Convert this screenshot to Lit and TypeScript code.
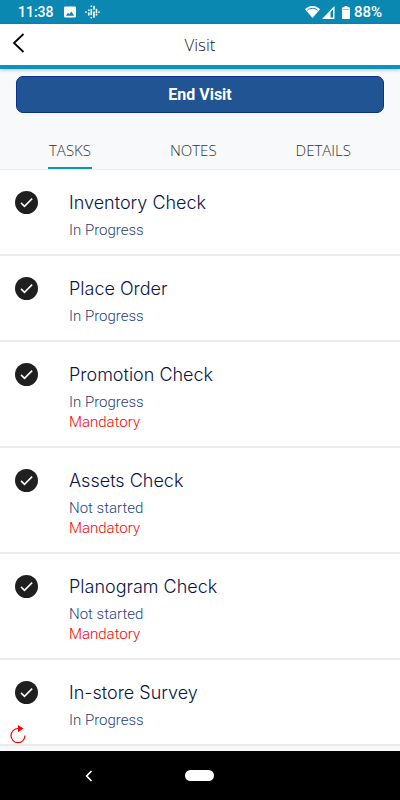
import { LitElement, html, css, nothing } from "lit";
import { customElement, property, state } from "lit/decorators.js";
import { classMap } from "lit/directives/class-map.js";

interface Task {
  title: string;
  status: string;
  mandatory: boolean;
}

const TASKS: Task[] = [
  { title: "Inventory Check", status: "In Progress", mandatory: false },
  { title: "Place Order", status: "In Progress", mandatory: false },
  { title: "Promotion Check", status: "In Progress", mandatory: true },
  { title: "Assets Check", status: "Not started", mandatory: true },
  { title: "Planogram Check", status: "Not started", mandatory: true },
  { title: "In-store Survey", status: "In Progress", mandatory: false },
];

@customElement("status-bar")
class StatusBar extends LitElement {
  static styles = css`
    :host {
      display: flex;
      align-items: center;
      justify-content: space-between;
      flex: none;
      height: 24px;
      padding: 0 18px;
      background: #0a88b2;
      color: #fff;
      font: 500 14px/24px Roboto, sans-serif;
    }
    .group {
      display: flex;
      align-items: center;
    }
    .clock {
      margin-right: 10px;
    }
    .picture {
      margin-right: 9px;
    }
    .signal {
      margin-left: 1px;
    }
    .battery {
      margin: 0 4px 0 7px;
    }
    .percent {
      font-size: 15px;
    }
    svg {
      display: block;
    }
  `;

  render() {
    return html`
      <div class="group">
        <span class="clock">11:38</span>
        <svg class="picture" width="12" height="12" viewBox="0 0 13 12">
          <path fill="#fff" fill-rule="evenodd" d="M1.5 0h10A1.5 1.5 0 0 1 13 1.500v9a1.500 1.500 0 0 1-1.500 1.500h-10A1.500 1.500 0 0 1 0 10.500v-9A1.500 1.500 0 0 1 1.500 0zM2 10h9L8 5.500 5.800 8.400 4.300 6.800z" />
        </svg>
        <svg width="15" height="14" viewBox="0 0 15 14" stroke="#fff" stroke-width="1.700" stroke-linecap="round">
          <path d="M1 7v.1M3.800 5.200v.1M3.800 8v1.800M6.300 1.200v.1M6.300 4.500v5M6.300 12.600v.1M9 1.500v2.500M9 7v5M11.500 4.500v3M11.500 9.600v.1M14 7v.1" />
        </svg>
      </div>
      <div class="group">
        <svg width="15" height="12" viewBox="0 0 15 12">
          <path fill="#fff" d="M7.500 12 0 3.200C4.200-1.100 10.800-1.100 15 3.200z" />
          <path fill="none" stroke="#0a88b2" d="M2.300 4.300c3-2.600 7.400-2.600 10.400 0" />
        </svg>
        <svg class="signal" width="14" height="13" viewBox="0 0 14 13">
          <path fill="#fff" fill-rule="evenodd" d="M13.500 0v13H1zM12 3.500 9.500 6v5.500H12z" />
        </svg>
        <svg class="battery" width="8" height="13" viewBox="0 0 8 13">
          <path fill="#fff" d="M2.500 0h3v1.200H7a1 1 0 0 1 1 1V12a1 1 0 0 1-1 1H1a1 1 0 0 1-1-1V2.200a1 1 0 0 1 1-1h1.500z" />
          <path stroke="#0a88b2" stroke-opacity=".5" d="M1 3.500h6" />
        </svg>
        <span class="percent">88%</span>
      </div>
    `;
  }
}

@customElement("task-row")
class TaskRow extends LitElement {
  @property({ attribute: false }) task!: Task;

  static styles = css`
    :host {
      display: block;
      background: #fff;
      border-bottom: 2px solid #ebebeb;
    }
    .row {
      display: grid;
      grid-template-columns: 24px 1fr;
      column-gap: 30px;
      padding: 21px 15px 14px;
    }
    .tick {
      display: grid;
      width: 23px;
      height: 23px;
    }
    .box,
    .mark {
      grid-area: 1 / 1;
      width: 23px;
      height: 23px;
      margin: 0;
    }
    .box {
      appearance: none;
      border-radius: 50%;
      background: #1f1f1f;
    }
    .mark {
      pointer-events: none;
      opacity: 0;
    }
    .box:checked + .mark {
      opacity: 1;
    }
    .title {
      display: block;
      color: #0c1445;
      font: 300 18px/24px Inter, sans-serif;
    }
    .line {
      margin: 0;
      font: 300 15px/20px Roboto, sans-serif;
      color: #1d3f7a;
    }
    .status {
      padding-top: 5px;
    }
    .mandatory {
      color: #fb0000;
    }
  `;

  render() {
    const { title, status, mandatory } = this.task;
    return html`
      <div class="row">
        <span class="tick">
          <input class="box" id="done" type="checkbox" checked />
          <svg class="mark" viewBox="0 0 24 24">
            <path fill="none" stroke="#fff" stroke-width="1.600" d="m6.300 12.400 3.600 3.600 8-8" />
          </svg>
        </span>
        <div>
          <label class="title" for="done">${title}</label>
          <p class="line status">${status}</p>
          ${mandatory ? html`<p class="line mandatory">Mandatory</p>` : nothing}
        </div>
      </div>
    `;
  }
}

@customElement("app-root")
class AppRoot extends LitElement {
  @state() private tab = "TASKS";

  static styles = css`
    :host {
      display: flex;
      flex-direction: column;
      height: 100vh;
      background: #f8f9fb;
      font-family: Roboto, sans-serif;
    }
    button {
      margin: 0;
      padding: 0;
      border: 0;
      background: none;
      color: inherit;
      cursor: pointer;
    }
    svg {
      display: block;
    }
    .header {
      display: grid;
      grid-template-columns: 40px 1fr 40px;
      align-items: center;
      flex: none;
      height: 41px;
      background: #fff;
      border-bottom: 4px solid #0795c0;
      box-shadow: 0 1px 3px rgba(0, 0, 0, 0.25);
    }
    .back {
      padding: 0 12px 4px;
    }
    .heading {
      margin: 0;
      text-align: center;
      color: #222;
      font: 300 17px/24px "Open Sans", sans-serif;
    }
    .action {
      display: flex;
      flex: none;
      padding: 7px 16px 0;
    }
    .end {
      flex: 1;
      height: 37px;
      border: 1px solid #0a3190;
      border-radius: 7px;
      background: #205493;
      color: #fff;
      font: 700 16px/24px Roboto, sans-serif;
    }
    .tabs {
      display: flex;
      justify-content: space-between;
      flex: none;
      margin-top: 20px;
      padding: 0 48px;
      border-bottom: 1px solid #ececee;
    }
    .tab {
      height: 36px;
      padding: 0 1px;
      border-bottom: 2px solid transparent;
      color: #333;
      font: 300 15px/20px "Open Sans", sans-serif;
    }
    .current {
      border-color: #0795c0;
    }
    .list {
      flex: 1;
      min-height: 0;
      overflow: hidden auto;
      scrollbar-width: none;
    }
    .content {
      position: relative;
      display: flex;
      flex-direction: column;
      flex: 1;
      min-height: 0;
    }
    .refresh {
      position: absolute;
      left: 10px;
      bottom: 7px;
    }
    .system {
      display: grid;
      grid-template-columns: 1fr 1fr 1fr;
      align-items: center;
      justify-items: center;
      flex: none;
      height: 49px;
      padding: 0 33px;
      background: #000;
    }
    .home {
      width: 29px;
      height: 11px;
      border-radius: 6px;
      background: #fff;
    }
  `;

  render() {
    return html`
      <status-bar></status-bar>
      <header class="header">
        <button class="back" aria-label="Back">
          <svg width="13" height="20" viewBox="0 0 13 20">
            <path fill="none" stroke="#000" stroke-width="1.800" d="M11.500 1 2 10l9.500 9" />
          </svg>
        </button>
        <h1 class="heading">Visit</h1>
      </header>
      <div class="action"><button class="end">End Visit</button></div>
      <nav class="tabs" role="tablist">
        ${["TASKS", "NOTES", "DETAILS"].map(
          (name) => html`<button
            role="tab"
            aria-selected=${name === this.tab}
            class=${classMap({ tab: true, current: name === this.tab })}
            @click=${() => (this.tab = name)}
          >${name}</button>`
        )}
      </nav>
      <main class="content">
        <div class="list">
          ${TASKS.map((task) => html`<task-row .task=${task}></task-row>`)}
        </div>
        <button class="refresh" aria-label="Refresh">
          <svg width="16" height="19" viewBox="0 0 16 19">
            <path fill="none" stroke="#f00" stroke-width="1.200" d="M9 3.500H8a7 7.100 0 1 0 7 7.100" />
            <path fill="#f00" d="M8 0l5.500 3.500L8 7.200z" />
          </svg>
        </button>
      </main>
      <footer class="system">
        <button aria-label="System back">
          <svg width="8" height="12" viewBox="0 0 8 12">
            <path fill="none" stroke="#fff" stroke-width="1.700" d="M6.500 1 1.700 6l4.800 5" />
          </svg>
        </button>
        <button class="home" aria-label="Home"></button>
      </footer>
    `;
  }
}
